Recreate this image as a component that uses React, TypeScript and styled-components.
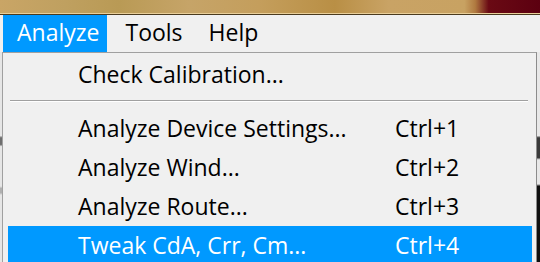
import styled, { createGlobalStyle } from "styled-components";

const GlobalStyle = createGlobalStyle`
  html, body {
    margin: 0;
    padding: 0;
    background: #f0f0f0;
    overflow: hidden;
  }
  body {
    font-family: "Open Sans", "Noto Sans", sans-serif;
  }
`;

const Screen = styled.div`
  width: 540px;
  height: 262px;
  overflow: hidden;
  background: #f0f0f0;
`;

const TitleStrip = styled.div`
  height: 13px;
  background: linear-gradient(
    90deg,
    #c9a566 0%,
    #bfa060 12%,
    #b99a55 22%,
    #c6a468 35%,
    #c49e5c 48%,
    #b98f45 62%,
    #c9a365 72%,
    #c8a262 86%,
    #b07a40 88%,
    #6a0a14 90.5%,
    #5c0010 100%
  );
  border-bottom: 1px solid #e9cf9a;
  box-shadow: 0 1px 0 #4a3a1e;
`;

const MenuBar = styled.nav`
  display: flex;
  gap: 4px;
  height: 37px;
  margin-top: 1px;
  padding-left: 3px;
  background: #f0f0f0;
`;

const MenuBarItem = styled.div<{ $active?: boolean }>`
  display: flex;
  align-items: center;
  padding: 0 8px 3px 14px;
  font-size: 23px;
  color: ${(p) => (p.$active ? "#ffffff" : "#000000")};
  background: ${(p) => (p.$active ? "#0099ff" : "transparent")};
`;

const Body = styled.div`
  display: flex;
`;

const Edge = styled.div`
  width: 2px;
  background: linear-gradient(
    180deg,
    #e6e6e6 0%,
    #e6e6e6 38%,
    #6e6e6e 39%,
    #6e6e6e 42%,
    #e6e6e6 43%,
    #e6e6e6 61%,
    #b0b0b0 62%,
    #b0b0b0 64%,
    #e6e6e6 65%
  );
`;

const Popup = styled.div`
  width: 535px;
  height: 220px;
  border: 1px solid #a0a0a0;
  border-right-color: #8c8c8c;
  background: #f0f0f0;
  padding: 2px 4px 0 5px;
  box-sizing: border-box;
`;

const RightEdge = styled.div`
  width: 3px;
  background: linear-gradient(
    180deg,
    #e8e8e8 0%,
    #e8e8e8 38%,
    #3a3a3a 39%,
    #3a3a3a 48%,
    #e8e8e8 49%,
    #e8e8e8 60%,
    #101010 61%,
    #101010 100%
  );
`;

const Row = styled.div<{ $selected?: boolean }>`
  display: grid;
  grid-template-columns: 387px 1fr;
  align-items: center;
  height: 39px;
  padding-bottom: 2px;
  box-sizing: border-box;
  font-size: 23px;
  color: ${(p) => (p.$selected ? "#ffffff" : "#000000")};
  background: ${(p) => (p.$selected ? "#0099ff" : "transparent")};
`;

const Label = styled.span`
  padding-left: 70px;
  white-space: nowrap;
`;

const Shortcut = styled.span`
  white-space: nowrap;
`;

const Separator = styled.div`
  height: 1px;
  margin: 6px 4px 7px 2px;
  background: #a0a0a0;
  border-bottom: 1px solid #ffffff;
`;

const items = [
  { label: "Analyze Device Settings...", key: "Ctrl+1" },
  { label: "Analyze Wind...", key: "Ctrl+2" },
  { label: "Analyze Route...", key: "Ctrl+3" },
  { label: "Tweak CdA, Crr, Cm...", key: "Ctrl+4", selected: true },
];

export default function App() {
  return (
    <Screen>
      <GlobalStyle />
      <TitleStrip />
      <MenuBar>
        <MenuBarItem $active>Analyze</MenuBarItem>
        <MenuBarItem>Tools</MenuBarItem>
        <MenuBarItem>Help</MenuBarItem>
      </MenuBar>
      <Body>
        <Edge />
        <Popup>
          <Row>
            <Label>Check Calibration...</Label>
          </Row>
          <Separator />
          {items.map((item) => (
            <Row key={item.key} $selected={item.selected}>
              <Label>{item.label}</Label>
              <Shortcut>{item.key}</Shortcut>
            </Row>
          ))}
        </Popup>
        <RightEdge />
      </Body>
    </Screen>
  );
}
